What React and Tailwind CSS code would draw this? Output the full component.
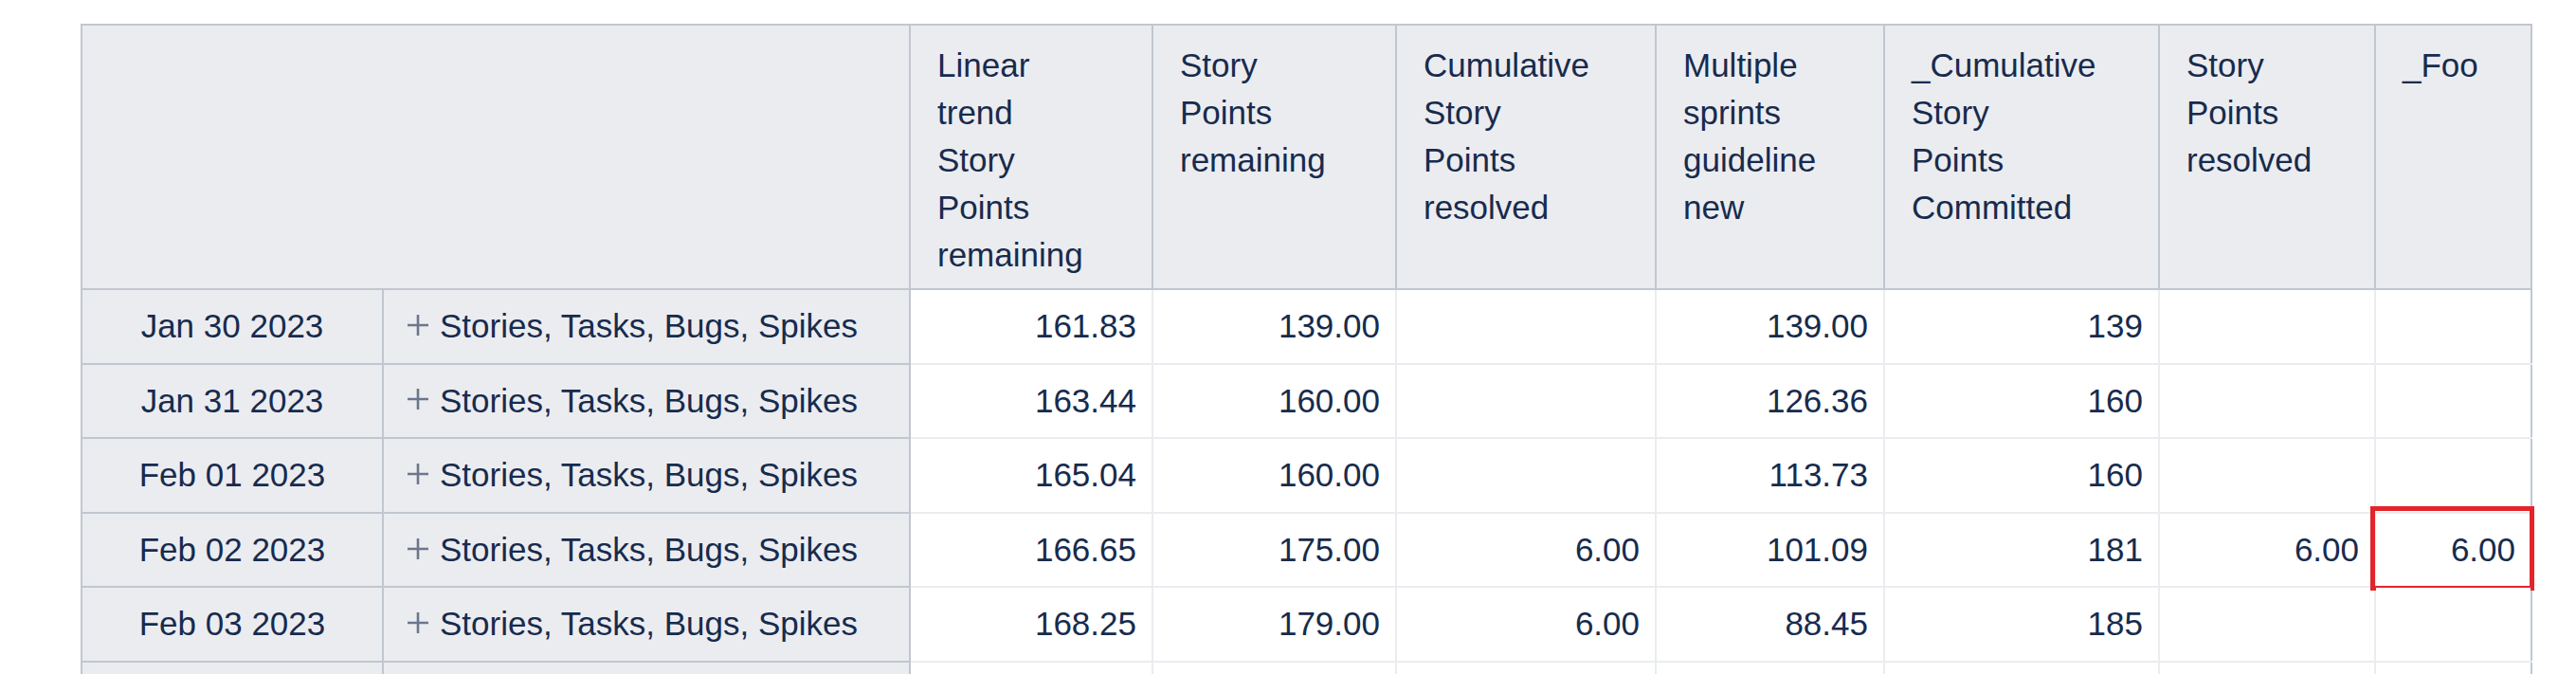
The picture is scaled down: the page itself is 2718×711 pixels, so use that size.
import React from 'react';

const columns = [
  ['Linear', 'trend', 'Story', 'Points', 'remaining'],
  ['Story', 'Points', 'remaining'],
  ['Cumulative', 'Story', 'Points', 'resolved'],
  ['Multiple', 'sprints', 'guideline', 'new'],
  ['_Cumulative', 'Story', 'Points', 'Committed'],
  ['Story', 'Points', 'resolved'],
  ['_Foo'],
];

const rows = [
  { date: 'Jan 30 2023', values: ['161.83', '139.00', '', '139.00', '139', '', ''] },
  { date: 'Jan 31 2023', values: ['163.44', '160.00', '', '126.36', '160', '', ''] },
  { date: 'Feb 01 2023', values: ['165.04', '160.00', '', '113.73', '160', '', ''] },
  { date: 'Feb 02 2023', values: ['166.65', '175.00', '6.00', '101.09', '181', '6.00', '6.00'], marked: true },
  { date: 'Feb 03 2023', values: ['168.25', '179.00', '6.00', '88.45', '185', '', ''] },
];

const PlusIcon = () => (
  <svg width="24" height="24" viewBox="0 0 24 24" className="shrink-0 -mt-[3px]">
    <path d="M12 1v22M1 12h22" stroke="#6b778c" strokeWidth="2.6" fill="none" />
  </svg>
);

const headCell = 'bg-[#ebecf0] border-2 border-[#c1c7d0]';
const dataCell = 'bg-white border-2 border-[#ebecf0] text-right pr-[16px]';
const lastCell = 'relative bg-white border-2 border-[#ebecf0] border-r-[#c1c7d0] text-right pr-[16px]';

const App = () => {
  return (
    <div className="h-[711px] overflow-hidden bg-white pt-[25px] pl-[85px] font-['Liberation_Sans',Arial,sans-serif] text-[35px] text-[#172b4d]">
      <table className="table-fixed w-[2585px] border-2 border-[#c1c7d0]">
        <colgroup>
          <col className="w-[318px]" />
          <col className="w-[556px]" />
          <col className="w-[256px]" />
          <col className="w-[257px]" />
          <col className="w-[274px]" />
          <col className="w-[241px]" />
          <col className="w-[290px]" />
          <col className="w-[228px]" />
          <col className="w-[165px]" />
        </colgroup>
        <thead>
          <tr className="h-[279px]">
            <th colSpan={2} className={headCell} />
            {columns.map((words, i) => (
              <th
                key={i}
                className={`${headCell} align-top text-left font-normal pt-[17px] pl-[28px] pr-[8px]`}
              >
                {words.map((word, j) => (
                  <div key={j} className="leading-[50px] whitespace-nowrap">
                    {word}
                  </div>
                ))}
              </th>
            ))}
          </tr>
        </thead>
        <tbody>
          {rows.map((row) => (
            <tr key={row.date} className="h-[78.6px]">
              <td className={`${headCell} text-center whitespace-nowrap`}>{row.date}</td>
              <td className={`${headCell} pl-[24px] whitespace-nowrap`}>
                <div className="flex items-center gap-[11px]">
                  <PlusIcon />
                  <span>Stories, Tasks, Bugs, Spikes</span>
                </div>
              </td>
              {row.values.map((value, i) => {
                const isLast = i === row.values.length - 1;
                return (
                  <td key={i} className={isLast ? lastCell : dataCell}>
                    {value}
                    {isLast && row.marked && (
                      <div className="absolute -left-[6px] -right-[4px] -top-[8px] -bottom-[5px] border-[5px] border-[#e3242b]" />
                    )}
                  </td>
                );
              })}
            </tr>
          ))}
          <tr className="h-[78.6px]">
            <td className={headCell} />
            <td className={headCell} />
            {columns.map((_, i) => (
              <td key={i} className={i === columns.length - 1 ? lastCell : dataCell} />
            ))}
          </tr>
        </tbody>
      </table>
    </div>
  );
};

export default App;
